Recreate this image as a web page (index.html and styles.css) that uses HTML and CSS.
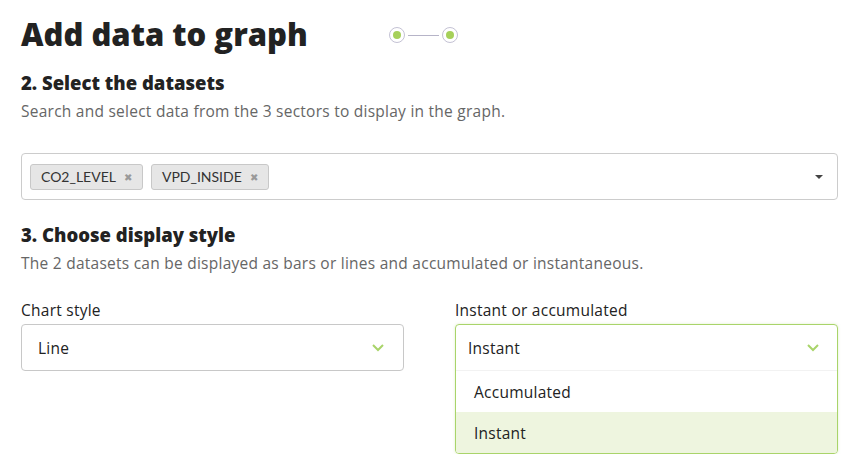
FILE: index.html
```html
<!DOCTYPE html>
<html lang="en">
<head>
    <meta charset="UTF-8">
    <meta name="viewport" content="width=device-width, initial-scale=1.0">
    <title>Add data to graph</title>
    <link rel="stylesheet" href="styles.css">
</head>
<body>
    <div class="page">
        <div class="title-row">
            <h1>Add data to graph</h1>
            <div class="stepper">
                <span class="step"></span>
                <span class="step-line"></span>
                <span class="step"></span>
            </div>
        </div>

        <h2>2. Select the datasets</h2>
        <p class="hint">Search and select data from the 3 sectors to display in the graph.</p>

        <div class="multi-select">
            <div class="tags">
                <span class="tag">CO2_LEVEL <span class="tag-x">&#10006;</span></span>
                <span class="tag">VPD_INSIDE <span class="tag-x">&#10006;</span></span>
            </div>
            <span class="caret"></span>
        </div>

        <h2 class="second">3. Choose display style</h2>
        <p class="hint">The 2 datasets can be displayed as bars or lines and accumulated or instantaneous.</p>

        <div class="columns">
            <div class="field">
                <label>Chart style</label>
                <div class="select">
                    <span>Line</span>
                    <svg class="chevron" width="14" height="9" viewBox="0 0 14 9"><path d="M2 2l5 5 5-5" fill="none" stroke="#a9d46a" stroke-width="2"/></svg>
                </div>
            </div>
            <div class="field">
                <label>Instant or accumulated</label>
                <div class="select open">
                    <div class="select-head">
                        <span>Instant</span>
                        <svg class="chevron" width="14" height="9" viewBox="0 0 14 9"><path d="M2 2l5 5 5-5" fill="none" stroke="#a9d46a" stroke-width="2"/></svg>
                    </div>
                    <div class="option">Accumulated</div>
                    <div class="option active">Instant</div>
                </div>
            </div>
        </div>
    </div>
</body>
</html>
```

FILE: styles.css
```css
body {
    margin: 0;
    font-family: "Open Sans", "Noto Sans", sans-serif;
    color: #222;
    background: #fff;
}
.page {
    padding: 14px 13px 0 21px;
}
.title-row {
    display: flex;
    align-items: center;
}
h1 {
    margin: 0;
    font-size: 31px;
    font-weight: 800;
    width: 368px;
    line-height: 40px;
}
.stepper {
    display: flex;
    align-items: center;
    margin-top: 2px;
}
.step {
    width: 16px;
    height: 16px;
    box-sizing: border-box;
    border: 1px solid #c4c2d4;
    border-radius: 50%;
    display: flex;
    align-items: center;
    justify-content: center;
}
.step::after {
    content: "";
    width: 8px;
    height: 8px;
    border-radius: 50%;
    background: #a6d05a;
}
.step-line {
    width: 31px;
    height: 1px;
    background: #b6b4c8;
    margin: 0 3px;
}
h2 {
    margin: 17px 0 0;
    font-size: 18.5px;
    font-weight: 800;
    line-height: 24px;
}
h2.second {
    margin-top: 23px;
}
.hint {
    margin: 6px 0 0;
    font-size: 15.5px;
    letter-spacing: 0.25px;
    color: #666;
    line-height: 20px;
}
.multi-select {
    margin-top: 32px;
    height: 47px;
    box-sizing: border-box;
    border: 1px solid #ccc;
    border-radius: 4px;
    display: flex;
    align-items: center;
    justify-content: space-between;
    padding: 0 14px 0 8px;
}
.tags {
    display: flex;
    gap: 8px;
}
.tag {
    background: #e6e6e6;
    border: 1px solid #c8c8c8;
    border-radius: 3px;
    height: 26px;
    box-sizing: border-box;
    padding: 0 10px 0 10px;
    display: flex;
    align-items: center;
    font-family: Lato, sans-serif;
    font-size: 14px;
    color: #333;
}
.tag-x {
    color: #999;
    font-size: 10px;
    margin-left: 8px;
}
.caret {
    width: 0;
    height: 0;
    border-left: 4px solid transparent;
    border-right: 4px solid transparent;
    border-top: 4px solid #444;
}
.columns {
    display: grid;
    grid-template-columns: 1fr 1fr;
    gap: 51px;
    margin-top: 27px;
}
.field label {
    display: block;
    font-size: 15.5px;
    letter-spacing: 0.25px;
    color: #222;
    line-height: 20px;
    margin-bottom: 4px;
}
.select {
    height: 47px;
    box-sizing: border-box;
    border: 1px solid #c8c8c8;
    border-radius: 4px;
    display: flex;
    align-items: center;
    justify-content: space-between;
    padding: 0 18px 0 16px;
    font-size: 15.5px;
    letter-spacing: 0.25px;
}
.select.open {
    display: block;
    height: auto;
    padding: 0;
    border-color: #a9d46a;
    box-shadow: 0 0 3px rgba(169, 212, 106, 0.35);
    overflow: hidden;
}
.select-head {
    height: 46px;
    display: flex;
    align-items: center;
    justify-content: space-between;
    padding: 0 17px 0 12px;
    border-bottom: 1px solid #f2f2f2;
    box-sizing: border-box;
}
.option {
    height: 41px;
    display: flex;
    align-items: center;
    padding-left: 18px;
}
.option.active {
    background: #eef5df;
}
```
